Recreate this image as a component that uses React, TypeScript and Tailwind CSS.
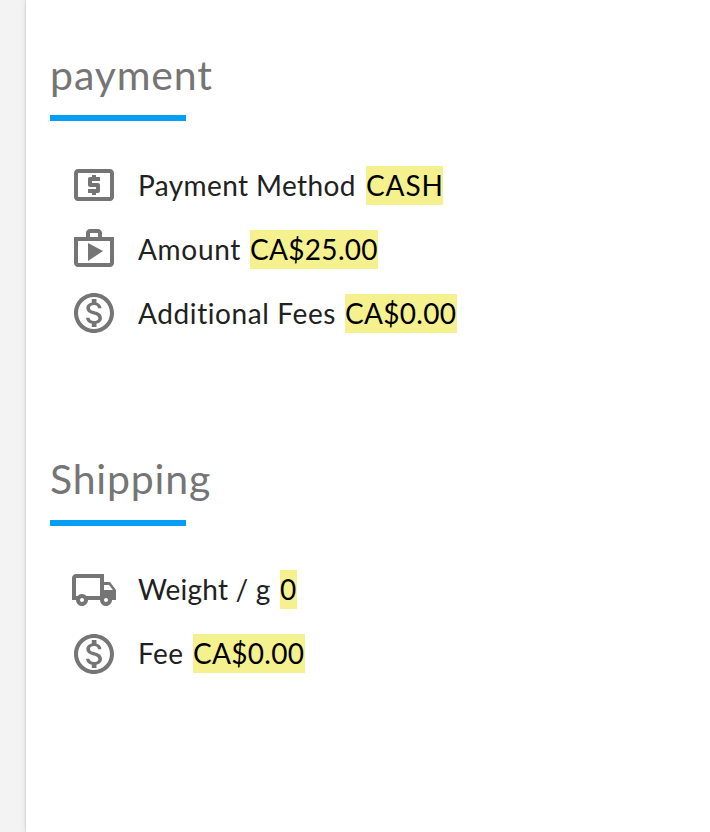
import type { ReactNode } from "react";
import {
  MdOutlineLocalAtm,
  MdOutlineShop,
  MdOutlineMonetizationOn,
  MdOutlineLocalShipping,
} from "react-icons/md";

function Row({ icon, label, labelClass, value, valueClass }: { icon: ReactNode; label: string; labelClass: string; value: string; valueClass: string }) {
  return (
    <li className="flex h-16 items-center">
      <span className="w-[68px] shrink-0 text-5xl text-[#757575]">{icon}</span>
      <span className={`whitespace-nowrap ${labelClass}`}>{label}</span>
      <mark className={`h-[39px] whitespace-nowrap bg-[#f6f18f] leading-[39px] text-black ${valueClass}`}>
        {value}
      </mark>
    </li>
  );
}

export default function App() {
  return (
    <main className="flex h-[832px] w-[710px] overflow-hidden bg-[#f3f3f3] font-['Lato',sans-serif] text-[28px] text-[#212121] [font-variant-ligatures:none]">
      <div className="ml-[26px] flex-1 bg-white pl-6 shadow-[0_0_2px_rgba(0,0,0,0.22),0_0_8px_rgba(0,0,0,0.08)]">
        <section className="h-[405px] pt-[49px]">
          <h2 className="h-[66px] text-[41px] leading-[52px] tracking-[0.9px] text-[#757575]">payment</h2>
          <div className="h-1.5 w-[136px] bg-[#049ff4]" />
          <ul className="mt-8 pl-5">
            <Row icon={<MdOutlineLocalAtm />} label="Payment Method" labelClass="w-[228px] tracking-[0.4px]" value="CASH" valueClass="w-[77px] tracking-[0.9px]" />
            <Row icon={<MdOutlineShop />} label="Amount" labelClass="w-[112px] tracking-[0.7px]" value="CA$25.00" valueClass="w-[128px] tracking-[0.3px]" />
            <Row icon={<MdOutlineMonetizationOn />} label="Additional Fees" labelClass="w-[207px] tracking-[0.6px]" value="CA$0.00" valueClass="w-[112px] tracking-[0.3px]" />
          </ul>
        </section>
        <section className="pt-12">
          <h2 className="h-[67px] text-[41px] leading-[52px] tracking-[0.8px] text-[#757575]">Shipping</h2>
          <div className="h-1.5 w-[136px] bg-[#049ff4]" />
          <ul className="mt-8 pl-5">
            <Row icon={<MdOutlineLocalShipping />} label="Weight / g" labelClass="mb-0.5 w-[142px] tracking-[0.2px]" value="0" valueClass="mb-0.5 w-[17px]" />
            <Row icon={<MdOutlineMonetizationOn />} label="Fee" labelClass="mb-0.5 w-[55px] tracking-[0.4px]" value="CA$0.00" valueClass="mb-0.5 w-[112px] tracking-[0.3px]" />
          </ul>
        </section>
      </div>
    </main>
  );
}
